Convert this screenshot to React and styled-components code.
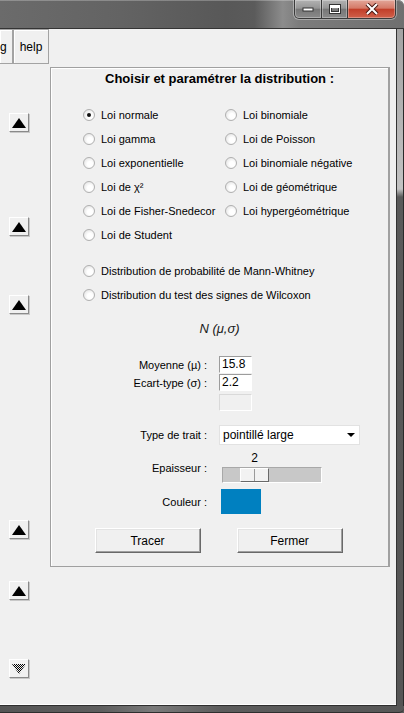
import styled, { createGlobalStyle } from "styled-components";

const GlobalStyle = createGlobalStyle`
  html, body {
    margin: 0;
    padding: 0;
    background: #f0f0f0;
  }
  body {
    font-family: "Liberation Sans", Arial, sans-serif;
    color: #000;
  }
`;

const Window = styled.div`
  width: 404px;
  height: 713px;
  display: flex;
  flex-direction: column;
  overflow: hidden;
  background: #5c5c5c;
  border-top-right-radius: 6px;
`;

const TitleBar = styled.div`
  height: 28px;
  flex-shrink: 0;
  display: flex;
  justify-content: flex-end;
  padding-right: 8px;
  border-bottom: 1px solid #343434;
  border-top-right-radius: 6px;
  background: linear-gradient(
    90deg,
    #6b6b6b 0%,
    #636363 30%,
    #585858 56%,
    #5b5b5b 63%,
    #8c8c8c 70%,
    #7c7c7c 74%,
    #6f6f6f 100%
  );
  box-shadow: inset 0 1px 0 rgba(255, 255, 255, 0.25);
`;

const CaptionGroup = styled.div`
  display: flex;
  height: 19px;
  border-radius: 0 0 5px 5px;
  box-shadow: 0 0 0 1px rgba(255, 255, 255, 0.35);
  overflow: hidden;
`;

const CaptionButton = styled.div`
  width: ${(p) => p.$w}px;
  height: 19px;
  box-sizing: border-box;
  display: flex;
  align-items: center;
  justify-content: center;
  border: 1px solid #3a3a3a;
  border-top: none;
  border-left-width: ${(p) => (p.$first ? 1 : 0)}px;
  background: ${(p) =>
    p.$close
      ? "linear-gradient(#e2a699 0%, #d57a68 45%, #c23f2a 52%, #d0604a 100%)"
      : "linear-gradient(#b2b2b2 0%, #969696 45%, #777 52%, #8a8a8a 100%)"};
  border-bottom-left-radius: ${(p) => (p.$first ? 5 : 0)}px;
  border-bottom-right-radius: ${(p) => (p.$close ? 5 : 0)}px;
  box-shadow: inset 0 0 0 1px rgba(255, 255, 255, 0.3);
`;

const Middle = styled.div`
  flex: 1;
  display: flex;
  min-height: 0;
`;

const Client = styled.div`
  flex: 1;
  display: flex;
  flex-direction: column;
  background: #f0f0f0;
  border-right: 1px solid #333;
  border-bottom: 1px solid #2e2e2e;
  box-shadow: inset 0 -1px 0 #fff;
`;

const RightFrame = styled.div`
  width: 7px;
  flex-shrink: 0;
  border-right: 1px solid #2a2a2a;
  box-sizing: border-box;
  background: linear-gradient(
    180deg,
    #a3a3a3 0px,
    #c2c2c2 160px,
    #5a5a5a 168px,
    #555 100%
  );
`;

const BottomFrame = styled.div`
  height: 7px;
  flex-shrink: 0;
  box-sizing: border-box;
  border-bottom: 1px solid #2e2e2e;
  border-bottom-right-radius: 5px;
  background: linear-gradient(
    90deg,
    #555 0%,
    #5e5e5e 25%,
    #7a7a7a 38%,
    #5c5c5c 55%,
    #575757 100%
  );
`;

const MenuBar = styled.div`
  display: flex;
  height: 35px;
  flex-shrink: 0;
`;

const MenuButton = styled.div`
  width: ${(p) => p.$w}px;
  height: 35px;
  box-sizing: border-box;
  display: flex;
  align-items: center;
  justify-content: ${(p) => (p.$cut ? "flex-start" : "center")};
  font-size: 12px;
  border: 1px solid #a3a3a3;
  border-left-width: ${(p) => (p.$cut ? 0 : 1)}px;
  box-shadow: inset 1px 1px 0 #fff;
  background: #f0f0f0;
`;

const Content = styled.div`
  flex: 1;
  display: flex;
`;

const LeftStrip = styled.div`
  width: 50px;
  flex-shrink: 0;
  display: flex;
  flex-direction: column;
  padding-left: 9px;
  box-sizing: border-box;
`;

const ArrowButton = styled.div`
  width: 20px;
  height: 19px;
  margin-top: ${(p) => p.$mt}px;
  box-sizing: border-box;
  display: flex;
  align-items: center;
  justify-content: center;
  background: #f0f0f0;
  border: 1px solid;
  border-color: #fff #8a8a8a #8a8a8a #fff;
  box-shadow: 1px 1px 0 #c8c8c8;
`;

const Panel = styled.div`
  width: 340px;
  height: 500px;
  margin-top: 3px;
  box-sizing: border-box;
  border: 1px solid #a0a0a0;
  border-right-width: 2px;
  box-shadow: inset 1px 1px 0 #fff;
  display: flex;
  flex-direction: column;
`;

const PanelTitle = styled.div`
  margin-top: 3px;
  font-size: 13px;
  font-weight: bold;
  line-height: 16px;
  text-align: center;
`;

const RadioGrid = styled.div`
  margin-top: 16px;
  padding-left: 32px;
  display: grid;
  grid-template-columns: 142px auto;
  grid-auto-rows: 24px;
  grid-auto-flow: column;
  grid-template-rows: repeat(6, 24px);
`;

const RadioList = styled.div`
  margin-top: 12px;
  padding-left: 32px;
  display: flex;
  flex-direction: column;
`;

const RadioRow = styled.div`
  height: 24px;
  display: flex;
  align-items: center;
  gap: 6px;
  font-size: 11px;
  white-space: nowrap;
`;

const RadioCircle = styled.span`
  width: 12px;
  height: 12px;
  box-sizing: border-box;
  border-radius: 50%;
  border: 1px solid #b0b0b0;
  background: radial-gradient(circle at 60% 60%, #fff 0 30%, #e2e2e2 85%);
  display: flex;
  align-items: center;
  justify-content: center;
  flex-shrink: 0;
  &::after {
    content: "";
    width: 4px;
    height: 4px;
    border-radius: 50%;
    background: ${(p) => (p.$checked ? "#111" : "transparent")};
  }
`;

const Formula = styled.div`
  margin-top: 14px;
  font-size: 13px;
  line-height: 16px;
  font-style: italic;
  text-align: center;
  color: #1a1a1a;
`;

const FormRow = styled.div`
  margin-top: ${(p) => p.$mt}px;
  display: grid;
  grid-template-columns: 156px auto;
  column-gap: 12px;
  align-items: center;
`;

const Label = styled.div`
  font-size: 11px;
  text-align: right;
  white-space: nowrap;
`;

const TextInput = styled.div`
  width: 33px;
  height: 17px;
  box-sizing: border-box;
  padding-left: 2px;
  font-size: 12px;
  line-height: 15px;
  background: ${(p) => (p.$disabled ? "#f0f0f0" : "#fff")};
  border: 1px solid;
  border-color: ${(p) =>
    p.$disabled ? "#d9d9d9 #fff #fff #d9d9d9" : "#9c9c9c #fff #fff #9c9c9c"};
`;

const Select = styled.div`
  width: 141px;
  height: 20px;
  box-sizing: border-box;
  padding: 0 4px 0 3px;
  display: flex;
  align-items: center;
  justify-content: space-between;
  font-size: 12px;
  background: #fff;
  border: 1px solid #e2e2e2;
`;

const SelectArrow = styled.span`
  width: 0;
  height: 0;
  border-left: 4px solid transparent;
  border-right: 4px solid transparent;
  border-top: 4px solid #000;
`;

const SliderBlock = styled.div`
  display: flex;
  flex-direction: column;
  padding-left: 3px;
`;

const SliderValue = styled.div`
  height: 15px;
  font-size: 12px;
  line-height: 12px;
  text-align: center;
`;

const SliderTrack = styled.div`
  position: relative;
  width: 100px;
  height: 16px;
  box-sizing: border-box;
  background: #c8c8c8;
  border: 1px solid;
  border-color: #a8a8a8 #fff #fff #a8a8a8;
`;

const SliderThumb = styled.div`
  position: absolute;
  top: 0;
  width: 29px;
  height: 14px;
  box-sizing: border-box;
  background: linear-gradient(90deg, #f2f2f2 0 13px, #9a9a9a 13px 14px, #f2f2f2 14px);
  border: 1px solid;
  border-color: #fff #696969 #696969 #fff;
`;

const ColorSwatch = styled.div`
  width: 40px;
  height: 25px;
  margin-left: 2px;
  background: ${(p) => p.$color};
`;

const ButtonRow = styled.div`
  margin-top: 14px;
  display: flex;
  justify-content: center;
  gap: 36px;
  padding-right: 2px;
`;

const PushButton = styled.div`
  width: 106px;
  height: 25px;
  box-sizing: border-box;
  display: flex;
  align-items: center;
  justify-content: center;
  font-size: 12px;
  background: #f0f0f0;
  border: 1px solid;
  border-color: #fff #696969 #696969 #fff;
  box-shadow: inset -1px -1px 0 #a0a0a0, inset 1px 1px 0 #e3e3e3;
`;

const leftColumn = [
  { label: "Loi normale", checked: true },
  { label: "Loi gamma" },
  { label: "Loi exponentielle" },
  { label: "Loi de χ²" },
  { label: "Loi de Fisher-Snedecor" },
  { label: "Loi de Student" },
];

const rightColumn = [
  { label: "Loi binomiale" },
  { label: "Loi de Poisson" },
  { label: "Loi binomiale négative" },
  { label: "Loi de géométrique" },
  { label: "Loi hypergéométrique" },
];

const extraLaws = [
  "Distribution de probabilité de Mann-Whitney",
  "Distribution du test des signes de Wilcoxon",
];

// marges verticales entre les petits boutons de gauche
const arrowGaps = [49, 85, 59, 206, 42];

function UpArrow() {
  return (
    <svg width="14" height="10" viewBox="0 0 14 10">
      <polygon points="7,0 14,10 0,10" fill="#000" />
    </svg>
  );
}

function DownArrowDithered() {
  return (
    <svg width="14" height="10" viewBox="0 0 14 10">
      <defs>
        <pattern id="dith" width="2" height="2" patternUnits="userSpaceOnUse">
          <rect width="1" height="1" fill="#000" />
          <rect x="1" y="1" width="1" height="1" fill="#000" />
        </pattern>
      </defs>
      <polygon points="0,0 14,0 7,10" fill="url(#dith)" />
    </svg>
  );
}

function Radio({ label, checked }) {
  return (
    <RadioRow>
      <RadioCircle $checked={checked} />
      <span>{label}</span>
    </RadioRow>
  );
}

export default function App() {
  const thickness = 2;
  const thumbLeft = 18;

  return (
    <>
      <GlobalStyle />
      <Window>
        <TitleBar>
          <CaptionGroup>
            <CaptionButton $w={28} $first>
              <svg width="12" height="6" viewBox="0 0 12 6">
                <rect x="1" y="2" width="10" height="3" fill="#fff" stroke="#333" strokeWidth="1" />
              </svg>
            </CaptionButton>
            <CaptionButton $w={26}>
              <svg width="12" height="10" viewBox="0 0 12 10">
                <rect x="1.5" y="1.5" width="9" height="7" fill="none" stroke="#333" strokeWidth="3" />
                <rect x="1.5" y="1.5" width="9" height="7" fill="none" stroke="#fff" strokeWidth="1" />
                <rect x="2" y="2" width="8" height="2" fill="#fff" />
              </svg>
            </CaptionButton>
            <CaptionButton $w={48} $close>
              <svg width="14" height="12" viewBox="0 0 14 12">
                <path d="M2 1 L12 11 M12 1 L2 11" stroke="#4a1a14" strokeWidth="4" />
                <path d="M2 1 L12 11 M12 1 L2 11" stroke="#fff" strokeWidth="2" />
              </svg>
            </CaptionButton>
          </CaptionGroup>
        </TitleBar>

        <Middle>
          <Client>
            <MenuBar>
              <MenuButton $w={13} $cut>
                g
              </MenuButton>
              <MenuButton $w={36}>help</MenuButton>
            </MenuBar>

            <Content>
              <LeftStrip>
                {arrowGaps.map((gap, i) => (
                  <ArrowButton key={i} $mt={gap}>
                    <UpArrow />
                  </ArrowButton>
                ))}
                <ArrowButton $mt={59}>
                  <DownArrowDithered />
                </ArrowButton>
              </LeftStrip>

              <Panel>
                <PanelTitle>Choisir et paramétrer la distribution :</PanelTitle>

                <RadioGrid>
                  {leftColumn.map((r) => (
                    <Radio key={r.label} label={r.label} checked={r.checked} />
                  ))}
                  {rightColumn.map((r) => (
                    <Radio key={r.label} label={r.label} />
                  ))}
                </RadioGrid>

                <RadioList>
                  {extraLaws.map((l) => (
                    <Radio key={l} label={l} />
                  ))}
                </RadioList>

                <Formula>N (μ,σ)</Formula>

                <FormRow $mt={19}>
                  <Label>Moyenne (µ) :</Label>
                  <TextInput>15.8</TextInput>
                </FormRow>
                <FormRow $mt={1}>
                  <Label>Ecart-type (σ) :</Label>
                  <TextInput>2.2</TextInput>
                </FormRow>
                <FormRow $mt={3}>
                  <span />
                  <TextInput $disabled />
                </FormRow>

                <FormRow $mt={14}>
                  <Label>Type de trait :</Label>
                  <Select>
                    <span>pointillé large</span>
                    <SelectArrow />
                  </Select>
                </FormRow>

                <FormRow $mt={7}>
                  <Label>Epaisseur :</Label>
                  <SliderBlock>
                    <SliderValue style={{ width: thumbLeft * 2 + 29 }}>{thickness}</SliderValue>
                    <SliderTrack>
                      <SliderThumb style={{ left: thumbLeft - 1 }} />
                    </SliderTrack>
                  </SliderBlock>
                </FormRow>

                <FormRow $mt={6}>
                  <Label>Couleur :</Label>
                  <ColorSwatch $color="#0080c0" />
                </FormRow>

                <ButtonRow>
                  <PushButton>Tracer</PushButton>
                  <PushButton>Fermer</PushButton>
                </ButtonRow>
              </Panel>
            </Content>
          </Client>
          <RightFrame />
        </Middle>
        <BottomFrame />
      </Window>
    </>
  );
}
